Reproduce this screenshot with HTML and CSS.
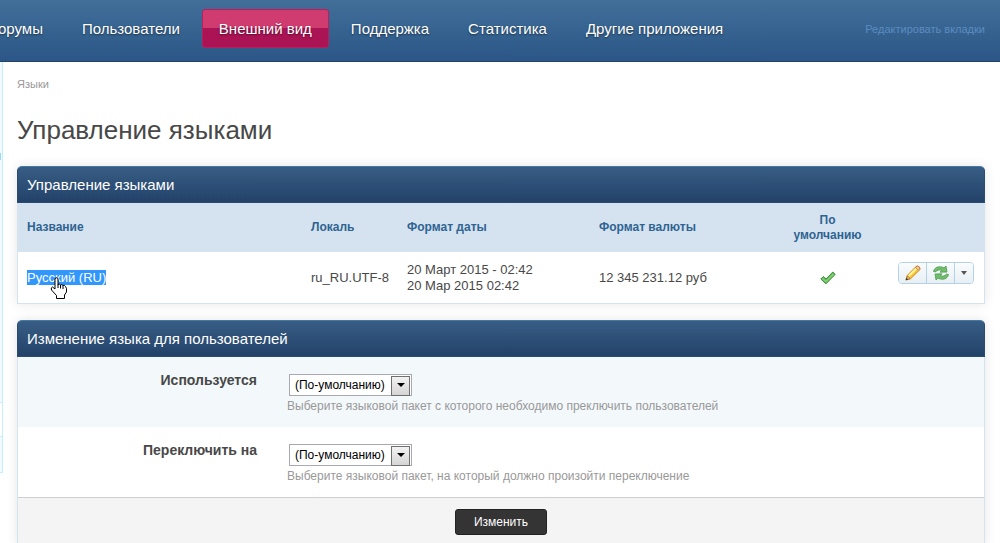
FILE: index.html
```html
<!DOCTYPE html>
<html lang="ru">
<head>
    <meta charset="UTF-8">
    <meta name="viewport" content="width=device-width, initial-scale=1.0">
    <title>Управление языками</title>
    <link rel="stylesheet" href="styles.css">
</head>
<body>
    <!-- Top navigation -->
    <header class="app-bar">
        <nav class="tabs">
            <a href="#" class="tab tab-first">орумы</a>
            <a href="#" class="tab">Пользователи</a>
            <a href="#" class="tab active">Внешний вид</a>
            <a href="#" class="tab">Поддержка</a>
            <a href="#" class="tab">Статистика</a>
            <a href="#" class="tab">Другие приложения</a>
        </nav>
        <a href="#" class="edit-tabs">Редактировать вкладки</a>
    </header>

    <div class="layout">
        <!-- Edge of the sidebar -->
        <aside class="sidebar">
            <div class="side-main"><a href="#">и</a></div>
            <div class="side-item"></div>
            <div class="side-last"></div>
        </aside>

        <main class="content">
            <nav class="breadcrumb"><a href="#">Языки</a></nav>
            <h1>Управление языками</h1>

            <!-- Languages -->
            <section class="box">
                <h3>Управление языками</h3>
                <table class="languages">
                    <colgroup>
                        <col class="col-name">
                        <col class="col-locale">
                        <col class="col-date">
                        <col class="col-money">
                        <col class="col-default">
                        <col class="col-actions">
                    </colgroup>
                    <thead>
                        <tr>
                            <th>Название</th>
                            <th>Локаль</th>
                            <th>Формат даты</th>
                            <th>Формат валюты</th>
                            <th class="center">По умолчанию</th>
                            <th></th>
                        </tr>
                    </thead>
                    <tbody>
                        <tr>
                            <td>
                                <span class="lang-name">Русский (RU)
                                    <svg class="pointer" width="18" height="23" viewBox="0 0 18 23" aria-hidden="true">
                                        <path d="M5 1.500Q6.500 0 8 1.500V7.500Q9.500 6.500 10.500 8Q12 7 13 8.500Q14.500 7.500 15.500 9.500L16.500 11.500V15L14.500 18V21.500H6.500V18.500L1.500 13Q.5 10.500 2.500 10L5 12Z" fill="#fff" stroke="#000"/>
                                        <path d="M8 7v4M10.500 8v3.500M13 8.500V12" fill="none" stroke="#000"/>
                                    </svg>
                                </span>
                            </td>
                            <td>ru_RU.UTF-8</td>
                            <td>20 Март 2015 - 02:42<br>20 Мар 2015 02:42</td>
                            <td>12 345 231.12 руб</td>
                            <td class="center">
                                <svg class="tick" width="16" height="14" viewBox="0 0 16 14" role="img" aria-label="Да">
                                    <path d="M.8 8L3.300 5.500L6 8L12.800 1L15.200 3.300L6 12.800Z" fill="#5fb653" stroke="#3f8f3a" stroke-linejoin="round"/>
                                    <path d="M2.500 7.500L6 10.500L13.500 3" fill="none" stroke="#86d27c" stroke-width="1.500"/>
                                </svg>
                            </td>
                            <td class="actions">
                                <div class="button-group">
                                    <button type="button" aria-label="Изменить язык">
                                        <svg width="16" height="16" viewBox="0 0 16 16">
                                            <path d="M1 15L2.200 10.500L11 1.500Q12.500 .3 14.200 1.800Q15.700 3.500 14.500 5L5.500 13.800Z" fill="#f7c62f" stroke="#cf8a28"/>
                                            <path d="M3.800 11L11.500 3.300" stroke="#fff2a0" stroke-width="2"/>
                                            <path d="M10.500 2.200L13.800 5.500L14.800 4.300Q15.200 1.500 12.300 1.200Z" fill="#f3d3b4" stroke="#c77f3c"/>
                                            <path d="M1.200 14.800L2.500 11L5 13.500Z" fill="#f1d9b0" stroke="#a8651c" stroke-width=".8"/>
                                            <path d="M.7 15.300L1.500 12.800L3.200 14.500Z" fill="#333"/>
                                        </svg>
                                    </button>
                                    <button type="button" aria-label="Обновить">
                                        <svg width="18" height="16" viewBox="0 0 18 16">
                                            <path d="M1.500 6.500C2.500 2 7 .5 12 2.800L14 1L15 7L8 7.200L9.800 5.300C7 4.500 5 5 3.500 7Z" fill="#72bd6c" stroke="#4b9c50" stroke-width=".8" stroke-linejoin="round"/>
                                            <path d="M16.500 9.500C15.500 14 11 15.500 6 13.200L4 15L3 9L10 8.800L8.200 10.700C11 11.500 13 11 14.500 9Z" fill="#72bd6c" stroke="#4b9c50" stroke-width=".8" stroke-linejoin="round"/>
                                        </svg>
                                    </button>
                                    <button type="button" class="more" aria-label="Ещё">
                                        <svg width="6" height="4" viewBox="0 0 6 4"><path d="M0 0H6L3 4Z" fill="#555"/></svg>
                                    </button>
                                </div>
                            </td>
                        </tr>
                    </tbody>
                </table>
            </section>

            <!-- Swap users language -->
            <form class="box">
                <h3>Изменение языка для пользователей</h3>
                <div class="field alt">
                    <label for="from">Используется</label>
                    <div class="field-content">
                        <div class="select-wrap">
                            <select id="from"><option>(По-умолчанию)</option></select>
                        </div>
                        <p>Выберите языковой пакет с которого необходимо преключить пользователей</p>
                    </div>
                </div>
                <div class="field">
                    <label for="to">Переключить на</label>
                    <div class="field-content">
                        <div class="select-wrap">
                            <select id="to"><option>(По-умолчанию)</option></select>
                        </div>
                        <p>Выберите языковой пакет, на который должно произойти переключение</p>
                    </div>
                </div>
                <div class="form-actions">
                    <button type="submit" class="submit-btn">Изменить</button>
                </div>
            </form>
        </main>
    </div>
</body>
</html>
```

FILE: styles.css
```css
* {
    margin: 0;
    padding: 0;
    box-sizing: border-box;
}

body {
    font-family: "Liberation Sans", Arial, sans-serif;
    font-size: 13px;
    line-height: 16px;
    color: #484848;
    background: #fff;
    overflow: hidden;
}

a {
    text-decoration: none;
}

/* Top navigation */
.app-bar {
    display: flex;
    justify-content: space-between;
    align-items: center;
    height: 62px;
    padding: 0 15px 4px 0;
    background: linear-gradient(#416f99, #2b5687);
    border-bottom: 1px solid #24436a;
}

.tabs {
    display: flex;
    gap: 5px;
}

.tab {
    height: 39px;
    padding: 0 16px;
    border: 1px solid transparent;
    border-radius: 3px;
    font-size: 15px;
    line-height: 37px;
    color: #fff;
    text-shadow: 0 1px 2px rgba(0, 0, 0, 0.5);
}

.tab-first {
    padding-left: 0;
    margin-left: -3px;
}

.tab.active {
    background: linear-gradient(#d03c70 50%, #aa1454 50%);
    border-color: #b91f5d;
}

.edit-tabs {
    font-size: 11px;
    color: #5c8cc0;
}

/* Sidebar */
.layout {
    display: flex;
}

.sidebar {
    flex: 0 0 3px;
    min-width: 0;
    overflow: hidden;
}

.sidebar div {
    background: #f1fafe;
    border-right: 1px solid #c5effc;
    border-bottom: 1px solid #c5effc;
}

.sidebar .side-main {
    display: flex;
    justify-content: flex-end;
    height: 341px;
    padding: 86px 1px 0 0;
}

.side-main a {
    color: #3c3c8c;
}

.sidebar .side-item {
    height: 34px;
    background: #fff;
}

.sidebar .side-last {
    height: 36px;
}

/* Content */
.content {
    flex: 1;
    min-width: 0;
    padding: 14px 15px 0 14px;
}

.breadcrumb {
    font-size: 11px;
}

.breadcrumb a {
    color: #999;
}

h1 {
    margin: 22px 0 20px;
    font-size: 26px;
    font-weight: normal;
    line-height: 32px;
}

.box {
    margin-bottom: 16px;
    background: #fff;
    border: 1px solid #d5e3ef;
    border-top: 0;
    border-radius: 5px 5px 0 0;
    box-shadow: 0 0 12px rgba(0, 0, 0, 0.1);
}

.box h3 {
    height: 37px;
    padding: 0 9px;
    margin: 0 -1px;
    border: 1px solid #2a4c73;
    border-top-color: #4479a3;
    border-radius: 5px 5px 0 0;
    background: linear-gradient(#385d84, #23426a);
    color: #fff;
    font-size: 15px;
    font-weight: normal;
    line-height: 35px;
}

/* Languages table */
.languages {
    width: 100%;
    table-layout: fixed;
    border-collapse: collapse;
}

.col-locale { width: 96px; }
.col-date { width: 192px; }
.col-money { width: 188px; }
.col-default { width: 100px; }
.col-actions { width: 106px; }

.languages th {
    height: 49px;
    padding: 0 10px 0 9px;
    background: #d5e3f0;
    color: #2f6392;
    font-size: 12px;
    line-height: 15px;
    text-align: left;
}

.languages td {
    height: 51px;
    padding: 0 10px 0 9px;
    white-space: nowrap;
}

.languages .center {
    text-align: center;
}

.lang-name {
    position: relative;
    background: #3297fd;
    color: #fff;
}

.pointer {
    position: absolute;
    left: 23px;
    top: 7px;
}

.tick {
    vertical-align: middle;
}

.languages .actions {
    padding-bottom: 10px;
}

.button-group {
    display: flex;
    width: max-content;
    margin-left: auto;
    border: 1px solid #b4d1ea;
    border-radius: 4px;
}

.button-group button {
    display: flex;
    align-items: center;
    justify-content: center;
    width: 28px;
    height: 20px;
    border: 0;
    border-right: 1px solid #b4d1ea;
    border-radius: 3px 0 0 3px;
    background: linear-gradient(#fafcfd, #e8eff4);
    cursor: pointer;
}

.button-group button + button {
    border-radius: 0;
}

.button-group button.more {
    width: 18px;
    border-right: 0;
    border-radius: 0 3px 3px 0;
}

/* Form */
.field {
    display: flex;
    gap: 30px;
    min-height: 70px;
    padding: 15px 10px 10px 0;
}

.field.alt {
    background: #f3f8fb;
}

.field label {
    width: 25%;
    font-size: 14px;
    font-weight: bold;
    text-align: right;
}

.field-content p {
    margin-top: 2px;
    color: #999;
    font-size: 12px;
}

.select-wrap {
    position: relative;
    width: 123px;
    margin: 2px 0 0 2px;
}

.select-wrap select {
    display: block;
    appearance: none;
    width: 100%;
    height: 22px;
    padding: 0 22px 0 5px;
    border: 1px solid #a9a9b4;
    border-radius: 0;
    background: #fff;
    color: #000;
    font-family: inherit;
    font-size: 12px;
}

/* Drop-down arrow */
.select-wrap::before {
    content: "";
    position: absolute;
    top: 2px;
    right: 2px;
    width: 17px;
    height: 18px;
    border: 1px solid #707070;
    background: linear-gradient(#f2f2f2, #d5d5d5);
    pointer-events: none;
}

.select-wrap::after {
    content: "";
    position: absolute;
    top: 9px;
    right: 7px;
    border: 4px solid transparent;
    border-top-color: #000;
    border-bottom: 0;
    pointer-events: none;
}

.form-actions {
    padding: 11px 10px;
    border-top: 1px solid #ccd0d2;
    background: #f4f4f4;
    text-align: center;
}

.submit-btn {
    height: 26px;
    padding: 0 18px;
    border: 1px solid #222;
    border-radius: 3px;
    background: #343434;
    color: #fff;
    font-family: inherit;
    font-size: 12px;
    cursor: pointer;
}
```
